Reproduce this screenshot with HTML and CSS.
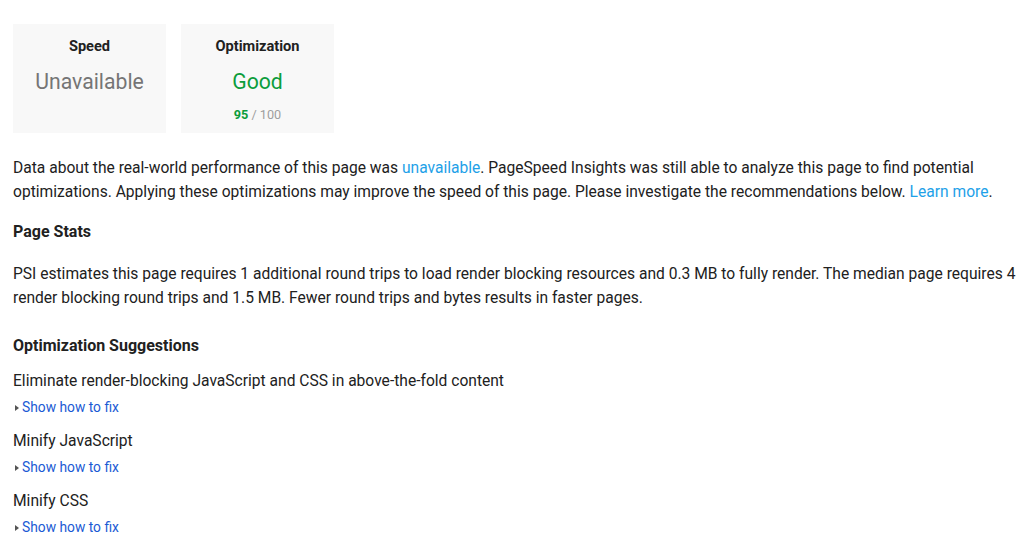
FILE: index.html
```html
<!DOCTYPE html>
<html>
<head>
<meta charset="utf-8">
<link rel="stylesheet" href="styles.css">
</head>
<body>
<div class="page">
  <div class="cards">
    <div class="card">
      <div class="card-title">Speed</div>
      <div class="card-value grey">Unavailable</div>
    </div>
    <div class="card">
      <div class="card-title">Optimization</div>
      <div class="card-value green">Good</div>
      <div class="card-score"><b>95</b> / 100</div>
    </div>
  </div>
  <p class="text">Data about the real-world performance of this page was <a class="light-link" href="#">unavailable</a>. PageSpeed Insights was still able to analyze this page to find potential optimizations. Applying these optimizations may improve the speed of this page. Please investigate the recommendations below. <a class="light-link" href="#">Learn more</a>.</p>
  <h3 class="heading">Page Stats</h3>
  <p class="text stats">PSI estimates this page requires 1 additional round trips to load render blocking resources and 0.3 MB to fully render. The median page requires 4 render blocking round trips and 1.5 MB. Fewer round trips and bytes results in faster pages.</p>
  <h3 class="heading sugg">Optimization Suggestions</h3>
  <div class="rule">
    <div class="rule-name">Eliminate render-blocking JavaScript and CSS in above-the-fold content</div>
    <a class="fix" href="#"><span class="tri"></span>Show how to fix</a>
  </div>
  <div class="rule">
    <div class="rule-name">Minify JavaScript</div>
    <a class="fix" href="#"><span class="tri"></span>Show how to fix</a>
  </div>
  <div class="rule">
    <div class="rule-name">Minify CSS</div>
    <a class="fix" href="#"><span class="tri"></span>Show how to fix</a>
  </div>
</div>
</body>
</html>
```
FILE: styles.css
```css
html, body {
  margin: 0;
  padding: 0;
  background: #fff;
}
body {
  font-family: Roboto, "Liberation Sans", sans-serif;
  color: #212121;
  font-size: 15.6px;
}
.page {
  padding: 24px 4px 0 13px;
}
.cards {
  display: flex;
  gap: 15px;
}
.card {
  width: 153px;
  height: 109px;
  background: #f8f8f8;
  box-sizing: border-box;
  padding-top: 13px;
  text-align: center;
}
.card-title {
  font-size: 14.6px;
  font-weight: 700;
  line-height: 18px;
}
.card-value {
  font-size: 21.2px;
  line-height: 28px;
  margin-top: 13px;
}
.grey { color: #757575; }
.green { color: #0c9d3c; }
.card-score {
  font-size: 12.7px;
  color: #9e9e9e;
  margin-top: 12px;
  line-height: 14px;
}
.card-score b {
  color: #0c9d3c;
  font-weight: 700;
}
.text {
  margin: 0;
  line-height: 24px;
}
.cards + .text {
  margin-top: 23px;
}
a {
  text-decoration: none;
}
.light-link {
  color: #1ea1e8;
}
.heading {
  font-size: 16px;
  font-weight: 700;
  margin: 0;
  line-height: 24px;
  margin-top: 16px;
}
.stats {
  margin-top: 18px;
}
.sugg {
  margin-top: 24px;
}
.rule {
  margin-top: 11px;
}
.rule + .rule {
  margin-top: 9px;
}
.rule-name {
  line-height: 24px;
}
.fix {
  display: flex;
  align-items: center;
  color: #1a5ad4;
  font-size: 13.8px;
  line-height: 25px;
  margin-top: 2px;
}
.tri {
  width: 0;
  height: 0;
  border-top: 3.5px solid transparent;
  border-bottom: 3.5px solid transparent;
  border-left: 4px solid #555;
  margin: 0 3px 0 2px;
}
```
